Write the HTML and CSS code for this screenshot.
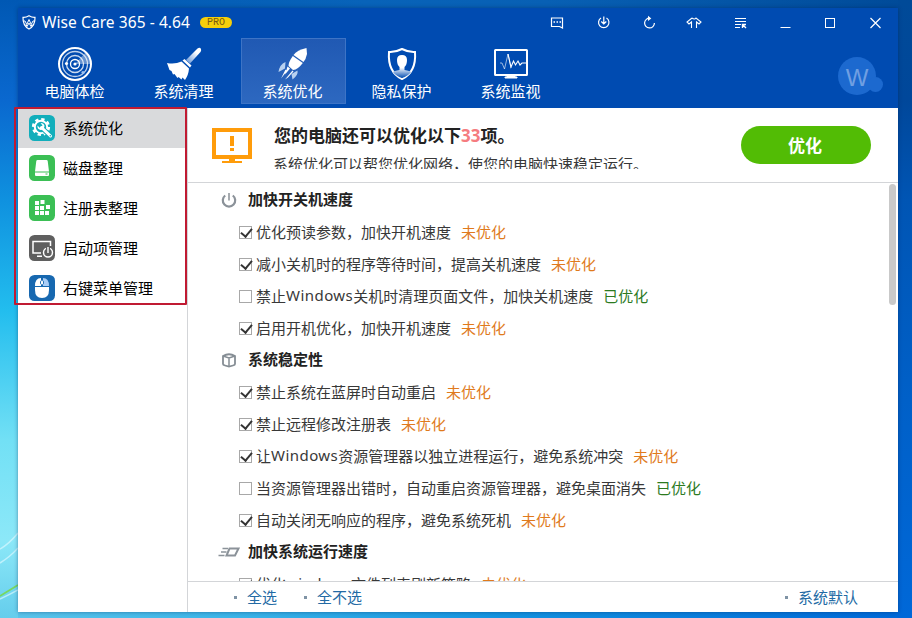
FILE: index.html
```html
<!DOCTYPE html>
<html lang="zh-CN">
<head>
    <meta charset="UTF-8">
    <meta name="viewport" content="width=device-width, initial-scale=1.0">
    <title>Wise Care 365</title>
    <link rel="stylesheet" href="styles.css">
</head>
<body>
    <svg class="wallpaper" width="18" height="100" viewBox="0 0 18 100" fill="none">
        <path d="M0 32Q9 27 18 16M0 46Q10 40 18 31M0 82Q9 78 18 73" stroke="#d8f8ff" stroke-width="1.5" opacity=".7"/>
        <path d="M0 79L18 68" stroke="#78d860" stroke-width="1.8"/>
    </svg>
    <div class="window">
        <header class="header">
            <div class="titlebar">
                <svg class="logo" width="14" height="15" viewBox="0 0 14 15" fill="none" stroke="#fff">
                    <path d="M7 .8Q10 2.6 13 2.4Q13.3 10.5 7 14Q.7 10.5 1 2.4Q4 2.6 7 .8Z" stroke-width="1.2"/>
                    <path d="M1.500 6H3L4.800 9.500L7 4.500L9.200 9.500L11 6H12.500M4 9.500L5 11.500L7 8L9 11.500L10 9.500"/>
                </svg>
                <span class="app-name">Wise Care 365 - 4.64</span>
                <span class="pro">PRO</span>
                <div class="controls">
                    <svg width="15" height="15" viewBox="0 0 15 15" fill="none" stroke="#fff"><path d="M1.5 3V11.5H9.5L12.5 13V3Z" stroke-width="1.2"/><path d="M3.5 7H5M6.5 7H8M9.5 7H11" stroke-width="1.6"/></svg>
                    <svg width="15" height="15" viewBox="-1.5 0 15 15" fill="none" stroke="#fff"><path d="M4.5 3A5.2 5.2 0 1 0 10 3M7.3 1.5V9M4.8 6.5L7.3 9L9.8 6.5" stroke-width="1.2"/></svg>
                    <svg width="15" height="15" viewBox="-2 0 15 15" fill="none" stroke="#fff"><path d="M8 3.2A4.9 4.9 0 1 0 12.4 8" stroke-width="1.2"/><path d="M6 .8L9.3 3.4L6 6Z" fill="#fff" stroke="none"/></svg>
                    <svg width="17" height="15" viewBox="-1 0 17 15" fill="none" stroke="#fff"><path d="M6 3Q8.500 5 10 3L15 7L13 9L10.500 7V13M6 3L1 7L3 9L5.500 7V13" stroke-width="1.1"/></svg>
                    <svg width="15" height="15" viewBox="0 0 15 15" fill="none" stroke="#fff"><path d="M2 3.5H13M2 6.5H13M2 9.5H8M2 12.5H7" stroke-width="1.2"/><path d="M9.5 13V9.5H13M9.5 9.5L13 13" stroke-width="1.4"/></svg>
                    <svg width="15" height="15" viewBox="0 0 15 15" stroke="#fff"><path d="M2.5 12.5H12.5"/></svg>
                    <svg width="15" height="15" viewBox="0 0 15 15" fill="none" stroke="#fff"><rect x="2.5" y="3.5" width="9" height="9"/></svg>
                    <svg width="15" height="15" viewBox="0 0 15 15" stroke="#fff"><path d="M2.5 3L12.5 13M12.5 3L2.5 13" stroke-width="1.2"/></svg>
                </div>
            </div>
            <div class="toolbar">
                <nav class="tabs">
                    <a class="tab">
                        <svg width="36" height="36" viewBox="0 0 36 36" fill="none" stroke="#fff">
                            <circle cx="18" cy="18" r="16" stroke-width="2"/>
                            <path d="M18 18L29 6A16 16 0 0 1 34 18Z" fill="#fff" opacity=".4" stroke="none"/>
                            <circle cx="18" cy="18" r="12.5" stroke-width="1.3" opacity=".75"/>
                            <circle cx="18" cy="18" r="8.5" stroke-width="1.3" opacity=".8"/>
                            <circle cx="18" cy="18" r="4.5" stroke-width="1.3"/>
                            <circle cx="18" cy="18" r="1.6" fill="#fff" stroke="none"/>
                            <circle cx="9.5" cy="17.5" r="1.6" fill="#fff" stroke="none"/>
                            <circle cx="26" cy="26.5" r="1.6" fill="#9fc3f0" stroke="none"/>
                        </svg>
                        <span>电脑体检</span>
                    </a>
                    <a class="tab">
                        <svg width="36" height="36" viewBox="0 0 36 36">
                            <defs><linearGradient id="handle" x1="1" y1="0" x2="0" y2="1"><stop offset=".3" stop-color="#fff"/><stop offset="1" stop-color="#5b8ed6"/></linearGradient></defs>
                            <path d="M20 14L31.5 2.5Q34 1 35 3Q35.5 4.500 34.500 6L24 17.500Z" fill="url(#handle)"/>
                            <path d="M16.500 14.500L18.500 13L25.500 19.500L24 21.500Z" fill="#fff"/>
                            <path d="M15.500 15.500L23 22.500Q22.500 29 19 34L16.500 31.500L15.500 33.500L12.500 31L11.500 32L8.500 28L7 28.500L5.500 25L3.500 24L1 17Q9 18.500 15.500 15.500Z" fill="#fff"/>
                        </svg>
                        <span>系统清理</span>
                    </a>
                    <a class="tab active">
                        <svg width="36" height="36" viewBox="0 0 36 36">
                            <path d="M31.500 2L32 8Q31 13 28.500 16L18.500 9Q22 4 31.500 2Z" fill="#fff"/>
                            <path d="M17.800 10L27.800 17Q23 23.500 18 24L13.500 20Q13.500 16 17.800 10Z" fill="#fff"/>
                            <path d="M10.500 16Q4.500 18.500 3.500 26L10 22.500ZM22.500 24.500Q23.500 29 17.500 33.500L16.500 28Z" fill="#b8d1f0"/>
                            <path d="M12.500 20.500L15 22.500L10 28.500ZM10.500 23.500L12 25L6 32.500ZM17.500 24.500L18.500 25.500L13 31.500L10 33.500Z" fill="#fff"/>
                        </svg>
                        <span>系统优化</span>
                    </a>
                    <a class="tab">
                        <svg width="36" height="36" viewBox="0 0 36 36">
                            <defs><linearGradient id="person" x2="0" y2="1"><stop offset=".55" stop-color="#fff"/><stop offset="1" stop-color="#004bb1"/></linearGradient></defs>
                            <path d="M18 3Q25 6.500 31 6Q32.500 26 18 33Q3.500 26 5 6Q11 6.500 18 3Z" fill="none" stroke="#fff" stroke-width="2"/>
                            <path d="M18 9Q23 9 23 14Q23 19 20.500 21V24Q26 25 27 26Q24 30 18 32Q12 30 9 26Q10 25 15.500 24V21Q13 19 13 14Q13 9 18 9Z" fill="url(#person)"/>
                        </svg>
                        <span>隐私保护</span>
                    </a>
                    <a class="tab">
                        <svg width="36" height="36" viewBox="0 0 36 36" fill="none" stroke="#fff">
                            <rect x="2" y="4" width="32" height="25" rx=".5" stroke-width="2"/>
                            <path d="M7 17H9L11.500 23L15 8L18 22" opacity=".6"/>
                            <path d="M15 8L18 21L20.500 15L22.500 19L25 15L27 19L29 17H33" stroke-width="1.1"/>
                            <path d="M14 30H22V31H24V32H12V31H14Z" fill="#fff"/>
                        </svg>
                        <span>系统监视</span>
                    </a>
                </nav>
                <div class="account">W</div>
            </div>
        </header>
        <div class="content">
            <aside class="sidebar">
                <a class="side-item selected">
                    <svg width="26" height="26" viewBox="0 0 26 26">
                        <rect width="26" height="26" rx="5.500" fill="#12aebb"/>
                        <circle cx="12" cy="12" r="7.800" fill="none" stroke="#fff" stroke-width="2.600" stroke-dasharray="3.300 2.826"/>
                        <circle cx="12" cy="12" r="6.200" fill="none" stroke="#fff" stroke-width="2"/>
                        <path d="M13 13L22 21.500" stroke="#12aebb" stroke-width="5"/>
                        <path d="M12.500 12.500L21.500 21" stroke="#fff" stroke-width="3" stroke-linecap="round"/>
                        <path d="M8.500 10.500L11 13L13.500 10.500L11.500 8Q15 8 15.500 11Q15 15 11.500 15Q8 14 8.500 10.500Z" fill="#fff"/>
                        <circle cx="21.300" cy="20.800" r=".8" fill="#12aebb"/>
                    </svg>
                    <span>系统优化</span>
                </a>
                <a class="side-item">
                    <svg width="26" height="26" viewBox="0 0 26 26">
                        <rect width="26" height="26" rx="5.500" fill="#3bbf55"/>
                        <path d="M8.500 5H17.500Q18.500 5 18.700 6L20 16.500H6L7.300 6Q7.500 5 8.500 5ZM6 17.500H20V20Q20 21 19 21H7Q6 21 6 20Z" fill="#fff"/>
                        <path d="M16.500 19H18.500" stroke="#3bbf55"/>
                    </svg>
                    <span>磁盘整理</span>
                </a>
                <a class="side-item">
                    <svg width="26" height="26" viewBox="0 0 26 26">
                        <rect width="26" height="26" rx="5.500" fill="#3bbf55"/>
                        <path d="M6 6H10V10H6ZM11.500 5H15.500V9H11.500ZM6 11H10V15H6ZM11 11H15V15H11ZM17 10H21V14H17ZM6 16H10V20H6ZM11 16H15V20H11ZM16 16H20V20H16Z" fill="#fff"/>
                    </svg>
                    <span>注册表整理</span>
                </a>
                <a class="side-item">
                    <svg width="26" height="26" viewBox="0 0 26 26" fill="none" stroke="#fff">
                        <rect width="26" height="26" rx="5.500" fill="#5f5f5f" stroke="none"/>
                        <path d="M12 18H4V6.500H21.500V11M8 21.300H13" stroke-width="1.500"/>
                        <circle cx="19" cy="17.500" r="4.500" stroke-width="1.400"/>
                        <path d="M19 11V18" stroke="#5f5f5f" stroke-width="4"/>
                        <path d="M19 12V18" stroke-width="1.400"/>
                    </svg>
                    <span>启动项管理</span>
                </a>
                <a class="side-item">
                    <svg width="26" height="26" viewBox="0 0 26 26">
                        <rect width="26" height="26" rx="5.500" fill="#1768b0"/>
                        <path d="M6 12H20V15Q20 23 13 23Q6 23 6 15Z" fill="#fff"/>
                        <path d="M6 11Q6 3 12 3V5.500Q11 6 11 7.500Q11 9 12 9.500V11Z" fill="#fff"/>
                        <path d="M20 11Q20 3 14 3V5.500Q15 6 15 7.500Q15 9 14 9.500V11Z" fill="#a9cdf6"/>
                        <rect x="12" y="5.500" width="2" height="4" rx="1" fill="#fff"/>
                    </svg>
                    <span>右键菜单管理</span>
                </a>
            </aside>
            <main class="main">
                <section class="summary">
                    <svg width="40" height="36" viewBox="0 0 40 36">
                        <path d="M0 0H40V31H0ZM4 4V27H36V4Z" fill="#ff9c0a" fill-rule="evenodd"/>
                        <path d="M18 8H22V18H18ZM18 20H22V23H18ZM17 31H23V33H30V35H10V33H17Z" fill="#ff9c0a"/>
                    </svg>
                    <div class="summary-text">
                        <h1>您的电脑还可以优化以下<em>33</em>项。</h1>
                        <p>系统优化可以帮您优化网络，使您的电脑快速稳定运行。</p>
                    </div>
                    <button class="optimize">优化</button>
                </section>
                <section class="list">
                    <h2>
                        <svg width="22" height="16" viewBox="0 0 22 16" fill="none" stroke="#8b9299"><path d="M7.200 3.500A6.200 6.200 0 1 0 14.800 3.500" stroke-width="2.200"/><path d="M11 1V8.500" stroke="#a6abb0" stroke-width="2"/></svg>
                        <span>加快开关机速度</span>
                    </h2>
                    <label><input type="checkbox" checked>优化预读参数，加快开机速度<span class="todo">未优化</span></label>
                    <label><input type="checkbox" checked>减小关机时的程序等待时间，提高关机速度<span class="todo">未优化</span></label>
                    <label><input type="checkbox">禁止<span class="latin">Windows</span>关机时清理页面文件，加快关机速度<span class="done">已优化</span></label>
                    <label><input type="checkbox" checked>启用开机优化，加快开机速度<span class="todo">未优化</span></label>
                    <h2>
                        <svg width="22" height="16" viewBox="0 0 22 16" fill="none" stroke="#858d94"><path d="M5 4Q11 .5 17 4V12Q17 13 15 13.500L11 14.500L7 13.500Q5 13 5 12Z" stroke-width="1.800"/><path d="M5 4L11 6L17 4M11 6V14" stroke-width="1.500"/></svg>
                        <span>系统稳定性</span>
                    </h2>
                    <label><input type="checkbox" checked>禁止系统在蓝屏时自动重启<span class="todo">未优化</span></label>
                    <label><input type="checkbox" checked>禁止远程修改注册表<span class="todo">未优化</span></label>
                    <label><input type="checkbox" checked>让<span class="latin">Windows</span>资源管理器以独立进程运行，避免系统冲突<span class="todo">未优化</span></label>
                    <label><input type="checkbox">当资源管理器出错时，自动重启资源管理器，避免桌面消失<span class="done">已优化</span></label>
                    <label><input type="checkbox" checked>自动关闭无响应的程序，避免系统死机<span class="todo">未优化</span></label>
                    <h2>
                        <svg width="22" height="16" viewBox="0 0 22 16" fill="none" stroke="#8b9299"><path d="M11.500 4.500H20.500L17 11.500H8.500Z" stroke-width="2"/><path d="M4.500 4.500H10M3 8H8.500M.5 11.500H6.500" stroke-width="1.500"/></svg>
                        <span>加快系统运行速度</span>
                    </h2>
                    <label><input type="checkbox" checked>优化<span class="latin">windows</span>文件列表刷新策略<span class="todo">未优化</span></label>
                    <div class="scrollbar"></div>
                </section>
                <footer class="footer">
                    <a>全选</a>
                    <a>全不选</a>
                    <a class="default">系统默认</a>
                </footer>
            </main>
        </div>
        <div class="marker"></div>
    </div>
</body>
</html>
```
FILE: styles.css
```css
* {
    box-sizing: border-box;
}
body {
    margin: 0;
    height: 618px;
    padding: 8px 14px 6px 18px;
    overflow: hidden;
    font-family: "Noto Sans", "Noto Sans CJK SC", sans-serif;
    font-size: 15px;
    color: #383838;
    background:
        linear-gradient(#0058b4 0, #0a68cf 100px, #0f91df 200px, #22bdee 310px, #72e0f5 440px, #8ce8f8 540px, #65cdec 618px) 0 0 / 18px 100% no-repeat,
        linear-gradient(#004a98 0, #00479a 100px, #0055b4 200px, #0060c8 400px, #0068d8 618px) 100% 0 / 14px 100% no-repeat,
        linear-gradient(90deg, #0058b4, #0863b9 40%, #0860b4 60%, #004a98) 0 0 / 100% 8px no-repeat,
        linear-gradient(90deg, #5cc5ea, #3bb5e8 25%, #1493e0 55%, #0068d8) 0 100% / 100% 6px no-repeat;
}
.wallpaper {
    position: absolute;
    left: 0;
    top: 517px;
}
.window {
    position: relative;
    height: 604px;
    display: flex;
    flex-direction: column;
    background: #fff;
    box-shadow: 0 0 4px rgba(0, 30, 80, 0.45);
}
.header {
    height: 100px;
    background: #004bb1;
    color: #fff;
}
.titlebar {
    height: 30px;
    display: flex;
    align-items: center;
    padding: 0 15px 2px 4px;
}
.logo {
    margin-right: 6px;
}
.app-name {
    width: 158px;
    font-size: 15.5px;
    letter-spacing: 0.08px;
    white-space: nowrap;
}
.pro {
    width: 32px;
    height: 11px;
    border-radius: 6px;
    background: #f5cf0a;
    color: #7a5a10;
    font: 10px/11px "Liberation Mono", monospace;
    text-align: center;
}
.controls {
    margin-left: auto;
    width: 333px;
    display: flex;
    align-items: center;
    justify-content: space-between;
}
.toolbar {
    display: flex;
    justify-content: space-between;
    padding: 0 15px 0 5px;
}
.tabs {
    display: flex;
    gap: 4px;
}
.tab {
    width: 105px;
    height: 66px;
    padding: 7px 2px 0 0;
    display: flex;
    flex-direction: column;
    align-items: center;
    border: 1px solid transparent;
}
.tab span {
    line-height: 18px;
}
.tab.active {
    border-color: #3d74c6;
    background: linear-gradient(#2059b3, #2d68c0);
}
.account {
    position: relative;
    width: 38px;
    height: 38px;
    margin: 19px 7px 0 0;
    border-radius: 50%;
    background: #1c69cf;
    color: #6f9fe2;
    font: 24px/41px "Liberation Sans", sans-serif;
    text-align: center;
}
.account::after {
    content: "";
    position: absolute;
    right: -7px;
    bottom: 3px;
    width: 15px;
    height: 15px;
    border-radius: 50%;
    background: #1c69cf;
}
.content {
    flex: 1;
    min-height: 0;
    display: flex;
}
.sidebar {
    width: 170px;
    border-right: 1px solid #d3d5d8;
}
.side-item {
    height: 40px;
    padding-left: 11px;
    display: flex;
    align-items: center;
    gap: 8px;
    color: #000;
}
.side-item span {
    padding-bottom: 2px;
}
.side-item.selected {
    background: #d9dadc;
}
.main {
    flex: 1;
    min-width: 0;
    display: flex;
    flex-direction: column;
}
.summary {
    height: 75px;
    padding: 0 27px 0 24px;
    display: flex;
    align-items: flex-start;
    border-bottom: 1px solid #d3d5d8;
}
.summary svg {
    margin-top: 20px;
}
.summary-text {
    margin: 16px 0 0 22px;
}
.summary h1 {
    margin: 0;
    font-size: 17px;
    line-height: 24px;
    color: #222;
}
.summary em {
    font-style: normal;
    color: #f57c80;
}
.summary p {
    margin: 9px 0 0 -1px;
    height: 12px;
    line-height: 14px;
    overflow: hidden;
}
.optimize {
    width: 130px;
    height: 38px;
    margin: 18px 0 0 auto;
    padding: 0 8px 2px 6px;
    border: none;
    border-radius: 19px;
    background: #52bc05;
    color: #fff;
    font: bold 17px "Noto Sans", "Noto Sans CJK SC", sans-serif;
}
.list {
    position: relative;
    flex: 1;
    min-height: 0;
    overflow: hidden;
}
.list h2 {
    margin: 0;
    height: 32px;
    padding-left: 30px;
    display: flex;
    align-items: center;
    gap: 8px;
    font-size: 15px;
    color: #222;
}
.list h2 svg {
    margin-top: 2px;
}
.list h2 span {
    padding-bottom: 2px;
}
.list label {
    height: 32px;
    padding-left: 51px;
    display: flex;
    align-items: center;
    white-space: nowrap;
}
.list input {
    appearance: none;
    width: 13px;
    height: 13px;
    margin: 2px 4px 0 0;
    border: 1px solid #a8a8a8;
    background: #fff;
}
.list input:checked::after {
    content: "";
    display: block;
    width: 5px;
    height: 9px;
    margin: 0 0 0 3px;
    border: solid #333;
    border-width: 0 2px 2px 0;
    transform: translateY(-1px) rotate(40deg);
}
.latin {
    letter-spacing: 0.45px;
}
.todo, .done {
    margin-left: 10px;
    color: #e07a1c;
}
.done {
    color: #2c7a1f;
}
.scrollbar {
    position: absolute;
    top: 1px;
    right: 2px;
    width: 7px;
    height: 121px;
    border-radius: 4px;
    background: #c9c9c9;
}
.footer {
    height: 31px;
    padding: 0 40px 0 46px;
    display: flex;
    align-items: center;
    gap: 27px;
    border-top: 1px solid #d3d5d8;
    color: #236aa4;
}
.footer a {
    display: flex;
    align-items: center;
    line-height: 20px;
}
.footer a::before {
    content: "";
    width: 3px;
    height: 3px;
    margin-right: 10px;
    background: #7f93a5;
}
.footer .default {
    margin-left: auto;
}
.marker {
    position: absolute;
    left: -4px;
    top: 99px;
    width: 173px;
    height: 198px;
    border: 2px solid #c01a32;
    border-radius: 1px;
}
```
